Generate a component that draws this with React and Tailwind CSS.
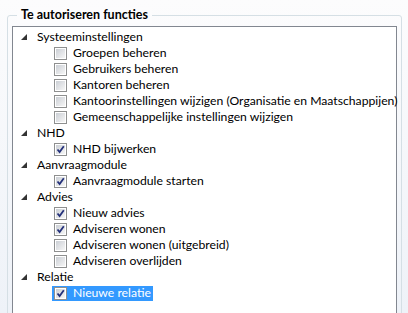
import React from 'react';

const tree = [
  {
    label: 'Systeeminstellingen',
    items: [
      { label: 'Groepen beheren' },
      { label: 'Gebruikers beheren' },
      { label: 'Kantoren beheren' },
      { label: 'Kantoorinstellingen wijzigen (Organisatie en Maatschappijen)' },
      { label: 'Gemeenschappelijke instellingen wijzigen' },
    ],
  },
  { label: 'NHD', items: [{ label: 'NHD bijwerken', checked: true }] },
  { label: 'Aanvraagmodule', items: [{ label: 'Aanvraagmodule starten', checked: true }] },
  {
    label: 'Advies',
    items: [
      { label: 'Nieuw advies', checked: true },
      { label: 'Adviseren wonen', checked: true },
      { label: 'Adviseren wonen (uitgebreid)' },
      { label: 'Adviseren overlijden' },
    ],
  },
  { label: 'Relatie', items: [{ label: 'Nieuwe relatie', checked: true, selected: true }] },
];

function Expander() {
  return (
    <svg width="6" height="6" viewBox="0 0 6 6" className="shrink-0">
      <path d="M6 0 L6 6 L0 6 Z" fill="#333333" />
    </svg>
  );
}

function CheckBox({ checked }) {
  return (
    <span className="w-[13px] h-[13px] shrink-0 border border-[#8e8f8f] bg-white p-[1px] flex">
      <span className="flex-1 bg-gradient-to-br from-[#cbcfd5] to-[#f6f6f6] flex items-center justify-center">
        {checked && (
          <svg width="9" height="9" viewBox="0 0 9 9">
            <path d="M1.5 4.5 L3.6 7 L7.8 1.2" fill="none" stroke="#23307a" strokeWidth="1.8" />
          </svg>
        )}
      </span>
    </span>
  );
}

export default function App() {
  return (
    <div
      className="w-[408px] h-[313px] overflow-hidden bg-gradient-to-b from-[#fcfcfd] to-[#eef2f8] pt-[15px] pl-[7px] pr-[6px] text-[12.2px] text-black"
      style={{ fontFamily: 'Lato, "Open Sans", sans-serif' }}
    >
      {/* Group box */}
      <div className="relative h-[320px] border border-[#d5dfe5] rounded-[3px] pt-[10px] px-[4px]">
        <div className="absolute left-[9px] -top-[9px] px-[4px] bg-[#fcfcfd] font-bold text-[12.5px] leading-[16px]">
          Te autoriseren functies
        </div>

        {/* Tree view */}
        <div className="h-[300px] border border-[#828790] bg-white pt-[2px]">
          {tree.map((group) => (
            <div key={group.label}>
              <div className="h-[16px] flex items-center pl-[8px] gap-[10px] leading-[16px]">
                <Expander />
                <span>{group.label}</span>
              </div>
              {group.items.map((item) => (
                <div key={item.label} className="h-[16px] flex items-center pl-[39px]">
                  <div
                    className={
                      item.selected
                        ? 'flex items-center gap-[6px] h-[15px] pl-[2px] pr-[2px] bg-[#3399ff] text-white'
                        : 'flex items-center gap-[6px] h-[15px] pl-[2px] pr-[2px]'
                    }
                  >
                    <CheckBox checked={item.checked} />
                    <span className="leading-[16px] whitespace-nowrap">{item.label}</span>
                  </div>
                </div>
              ))}
            </div>
          ))}
        </div>
      </div>
    </div>
  );
}
